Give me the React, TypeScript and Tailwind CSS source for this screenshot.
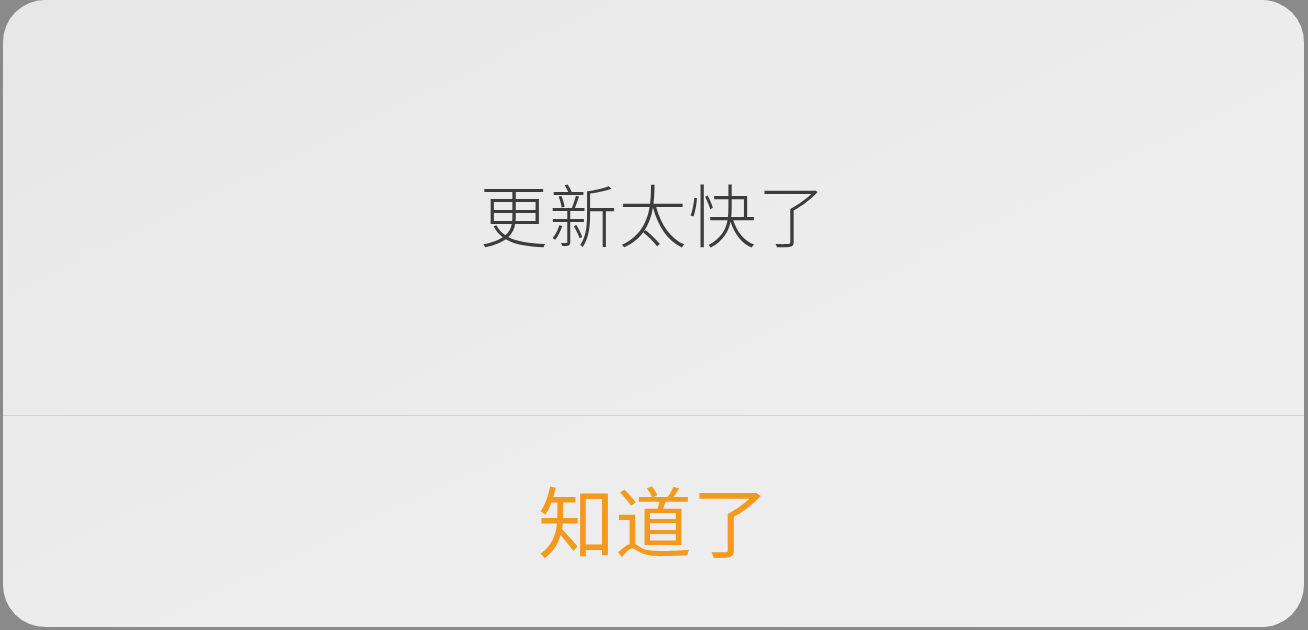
export default function App() {
  return (
    <div
      className="w-[1308px] h-[630px] bg-[#8a8a8a] pl-[3px] pr-[4px] pb-[3px] flex"
      style={{ fontFamily: '"Noto Sans CJK SC", "Noto Sans", sans-serif' }}
    >
      <div className="flex-1 flex flex-col rounded-[42px] overflow-hidden bg-gradient-to-br from-[#e7e7e8] via-[#ececec] to-[#efefef]">
        <div className="h-[415px] flex items-center justify-center pt-[10px]">
          <span className="text-[68px] font-light text-[#3c3c3c] leading-none tracking-[1.5px]">更新太快了</span>
        </div>
        <div className="h-px bg-[#d2d2d2]" />
        <div className="flex-1 flex items-center justify-center pb-[6px]">
          <span className="text-[77px] font-normal text-[#f39a1e] leading-none">知道了</span>
        </div>
      </div>
    </div>
  );
}
